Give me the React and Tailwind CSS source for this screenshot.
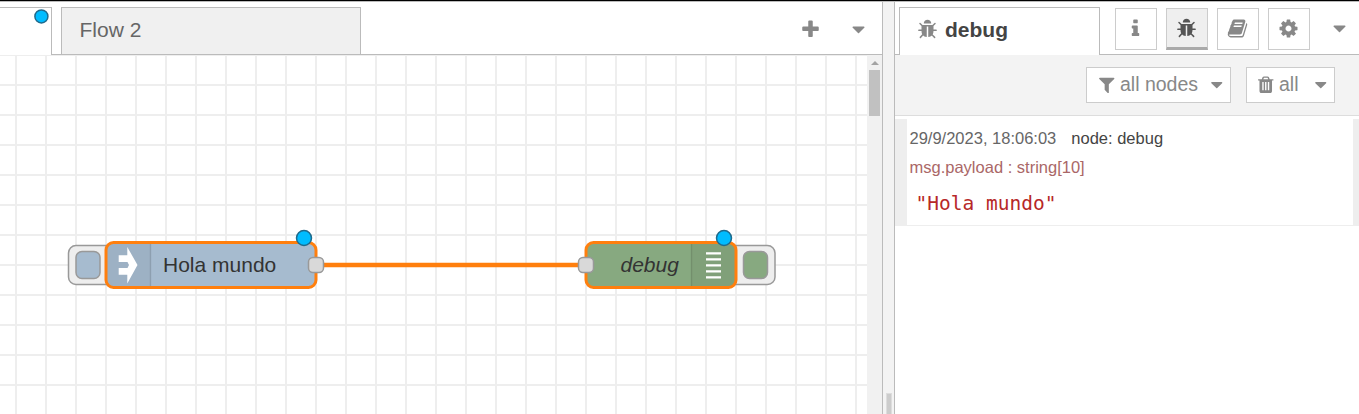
const ICONS = {
  info: "M1216 1344v128q0 26-19 45t-45 19h-512q-26 0-45-19t-19-45v-128q0-26 19-45t45-19h64v-384h-64q-26 0-45-19t-19-45v-128q0-26 19-45t45-19h384q26 0 45 19t19 45v576h64q26 0 45 19t19 45zm-128-1152v192q0 26-19 45t-45 19h-256q-26 0-45-19t-19-45v-192q0-26 19-45t45-19h256q26 0 45 19t19 45z",
  plus: "M1600 736v192q0 40-28 68t-68 28h-416v416q0 40-28 68t-68 28h-192q-40 0-68-28t-28-68v-416h-416q-40 0-68-28t-28-68v-192q0-40 28-68t68-28h416v-416q0-40 28-68t68-28h192q40 0 68 28t28 68v416h416q40 0 68 28t28 68z",
  caret: "M1408 704q0 26-19 45l-448 448q-19 19-45 19t-45-19l-448-448q-19-19-19-45t19-45 45-19h896q26 0 45 19t19 45z",
  filter: "M1595 295q17 41-14 70l-493 493v742q0 42-39 59-13 5-25 5-27 0-45-19l-256-256q-19-19-19-45v-486l-493-493q-31-29-14-70 17-39 59-39h1280q42 0 59 39z",
  cog: "M1152 896q0-106-75-181t-181-75-181 75-75 181 75 181 181 75 181-75 75-181zm512-109v222q0 12-8 23t-20 13l-185 28q-19 54-39 91 35 50 107 138 10 12 10 25t-9 23q-27 37-99 108t-94 71q-12 0-26-9l-138-108q-44 23-91 38-16 136-29 186-7 28-36 28h-222q-14 0-24.5-8.5t-11.5-21.5l-28-184q-49-16-90-37l-141 107q-10 9-25 9-14 0-25-11-126-114-165-168-7-10-7-23 0-12 8-23 15-21 51-66.5t54-70.5q-27-50-41-99l-183-27q-13-2-21-12.5t-8-23.5v-222q0-12 8-23t19-13l186-28q14-46 39-92-40-57-107-138-10-12-10-24 0-10 9-23 26-36 98.5-107.5t94.5-71.5q13 0 26 10l138 107q44-23 91-38 16-136 29-186 7-28 36-28h222q14 0 24.5 8.5t11.5 21.5l28 184q49 16 90 37l142-107q9-9 24-9 13 0 25 10 129 119 165 170 7 8 7 22 0 12-8 23-15 21-51 66.5t-54 70.5q26 50 41 98l183 28q13 2 21 12.5t8 23.5z",
  bug: "M1696 960q0 26-19 45t-45 19h-224q0 171-67 290l208 209q19 19 19 45t-19 45q-18 19-45 19t-45-19l-198-197q-5 5-15 13t-42 28.5-65 36.5-82 29-97 13v-896h-128v896q-51 0-101.500-13.500t-87-33-66-39-43.500-32.500l-15-14-183 207q-20 21-48 21-24 0-43-16-19-18-20.500-44.500t15.500-46.500l202-227q-58-114-58-274h-224q-26 0-45-19t-19-45 19-45 45-19h224v-294l-173-173q-19-19-19-45t19-45 45-19 45 19l173 173h844l173-173q19-19 45-19t45 19 19 45-19 45l-173 173v294h224q26 0 45 19t19 45zm-480-576h-640q0-133 93.500-226.500t226.500-93.500 226.500 93.500 93.500 226.500z",
  trash: "M704 1376v-704q0-14-9-23t-23-9h-64q-14 0-23 9t-9 23v704q0 14 9 23t23 9h64q14 0 23-9t9-23zm256 0v-704q0-14-9-23t-23-9h-64q-14 0-23 9t-9 23v704q0 14 9 23t23 9h64q14 0 23-9t9-23zm256 0v-704q0-14-9-23t-23-9h-64q-14 0-23 9t-9 23v704q0 14 9 23t23 9h64q14 0 23-9t9-23zm-544-992h448l-48-117q-7-9-17-11h-317q-10 2-17 11zm928 32v64q0 14-9 23t-23 9h-96v948q0 83-47 143.500t-113 60.500h-832q-66 0-113-58.500t-47-141.500v-952h-96q-14 0-23-9t-9-23v-64q0-14 9-23t23-9h309l70-167q15-37 54-63t79-26h320q40 0 79 26t54 63l70 167h309q14 0 23 9t9 23z",
  book: "M1703 478q40 57 18 129l-275 906q-19 64-76.500 107.500t-122.500 43.500h-923q-77 0-148.500-53.500t-99.500-131.500q-24-67-2-127 0-4 3-27t4-37q1-8-3-21.500t-3-19.500q2-11 8-21t16.500-23.500 16.500-23.500q23-38 45-91.500t30-91.500q3-10 .5-30t-.5-28q3-11 17-28t17-23q21-36 42-92t25-90q1-9-2.500-32t.5-28q4-13 22-30.500t22-22.500q19-26 42.500-84.500t27.500-96.500q1-8-3-25.500t-2-26.500q2-8 9-18t18-23 17-21q8-12 16.500-30.500t15-35 16-36 19.500-32 26.500-23.500 36-11.500 47.500 5.500l-1 3q38-9 51-9h761q74 0 114 56t18 130l-274 906q-36 119-71.500 153.500t-128.500 34.500h-869q-27 0-38 15-11 16-1 43 24 70 144 70h923q29 0 56-15.500t35-41.500l300-987q7-22 5-57 38 15 59 43zm-1064 2q-4 13 2 22.500t20 9.500h608q13 0 25.500-9.500t16.500-22.500l21-64q4-13-2-22.500t-20-9.500h-608q-13 0-25.500 9.500t-16.500 22.500zm-83 256q-4 13 2 22.500t20 9.500h608q13 0 25.500-9.500t16.500-22.500l21-64q4-13-2-22.500t-20-9.500h-608q-13 0-25.500 9.500t-16.500 22.500z",
};

function Icon({ name, size = "size-[21px]", className = "" }) {
  return (
    <svg viewBox="0 0 1792 1792" fill="currentColor" className={`${size} shrink-0 ${className}`}>
      <path d={ICONS[name]} />
    </svg>
  );
}

function ChangedDot({ cx, cy, r = 7.5 }) {
  return <circle cx={cx} cy={cy} r={r} fill="#00bcff" stroke="#1f6a8c" strokeWidth="1.5" />;
}

function Port({ cx }) {
  return <rect x={cx - 7.5} y="202.5" width="15" height="15" rx="4.5" fill="#d9d9d9" stroke="#999" strokeWidth="1.5" />;
}

function FlowCanvas() {
  return (
    <svg width="867" height="359" className="block shrink-0 bg-white">
      <defs>
        <pattern id="grid" x="15" y="-1" width="30" height="30" patternUnits="userSpaceOnUse">
          <rect width="30" height="2" fill="#eee" />
          <rect width="2" height="30" fill="#eee" />
        </pattern>
      </defs>
      <rect width="867" height="359" fill="url(#grid)" />
      <path d="M316 210H586" stroke="#ff7f0e" strokeWidth="4.5" />

      <g>
        <rect x="68.500" y="190.500" width="48" height="39" rx="7.5" fill="#eee" stroke="#999" strokeWidth="1.5" />
        <rect x="76" y="196.500" width="24" height="27" rx="6" fill="#a6bbcf" stroke="#999" strokeWidth="1.5" />
        <rect x="106" y="187.500" width="210" height="45" rx="7.5" fill="#a6bbcf" />
        <path d="M113.500 187.500H151V232.500H113.500a7.500 7.500 0 0 1-7.500-7.500V195a7.500 7.500 0 0 1 7.500-7.500z" fill="#000" fillOpacity=".05" />
        <path d="M150.500 188V232" stroke="#000" strokeOpacity=".1" strokeWidth="1.5" />
        <rect x="106" y="187.500" width="210" height="45" rx="7.5" fill="none" stroke="#ff7f0e" strokeWidth="3" />
        <path d="M118.700 200.300h8.600V192L137.500 210 127.300 228.500V219.700h-8.600V213h8.800l1.500-3-1.500-3h-8.800z" fill="#fff" />
        <text x="163" y="217" fontSize="21" fill="#333" className="font-['Liberation_Sans',sans-serif]">Hola mundo</text>
        <Port cx={316} />
        <ChangedDot cx={304} cy={183} />
      </g>

      <g>
        <rect x="727" y="190.500" width="48" height="39" rx="7.5" fill="#eee" stroke="#999" strokeWidth="1.5" />
        <rect x="743.500" y="196.500" width="24" height="27" rx="6" fill="#87a980" stroke="#999" strokeWidth="1.5" />
        <rect x="586" y="187.500" width="150" height="45" rx="7.5" fill="#87a980" />
        <path d="M691 187.500h37.500a7.500 7.500 0 0 1 7.500 7.500V225a7.500 7.500 0 0 1-7.500 7.500H691z" fill="#000" fillOpacity=".05" />
        <path d="M691.500 188V232" stroke="#000" strokeOpacity=".1" strokeWidth="1.5" />
        <rect x="586" y="187.500" width="150" height="45" rx="7.5" fill="none" stroke="#ff7f0e" strokeWidth="3" />
        <path d="M706 198.300h15M706 204.300h15M706 210.300h15M706 216.300h15M706 222.300h15" stroke="#fff" strokeWidth="2.200" />
        <text x="620.500" y="217" fontSize="21" fontStyle="italic" fill="#333" className="font-['Liberation_Sans',sans-serif]">debug</text>
        <Port cx={586} />
        <ChangedDot cx={724} cy={183} />
      </g>
    </svg>
  );
}

function Workspace() {
  return (
    <main className="flex w-[883px] shrink-0 flex-col border-r border-[#bbb] bg-white">
      <div className="flex h-[53px] shrink-0">
        <div className="mt-[5px] flex w-[52px] justify-end border-t border-r border-[#bbb]">
          <svg width="16" height="17" className="mr-[1px]">
            <ChangedDot cx={7.4} cy={8.4} r={6.5} />
          </svg>
        </div>
        <div className="flex flex-1 border-b border-[#bbb] pl-[9px]">
          <div className="mt-[5px] flex w-[300px] border border-b-0 border-[#bbb] bg-[#f0f0f0] pt-[6px] pl-[17.500px] text-[21px] leading-[32px] text-[#666]">
            Flow 2
          </div>
          <div className="ml-auto flex gap-[27px] pt-[17px] pr-[13.500px] text-[#888]">
            <Icon name="plus" />
            <Icon name="caret" />
          </div>
        </div>
      </div>
      <div className="flex h-[359px]">
        <FlowCanvas />
        <div className="flex w-[15px] flex-col bg-[#f1f1f1] px-[2px] pt-[6px]">
          <svg viewBox="0 0 8 4" className="mx-auto h-[4px] w-[8px]">
            <path d="M4 0l4 4H0z" fill="#a3a3a3" />
          </svg>
          <div className="mt-[5px] h-[46px] bg-[#c1c1c1]" />
        </div>
      </div>
    </main>
  );
}

function SidebarButton({ icon, active }) {
  return (
    <button
      className={
        active
          ? "flex size-[42px] justify-center border border-b-3 border-[#ccc] border-b-[#aaa] bg-[#efefef] pt-[9px] pr-[1px] text-[#555]"
          : "flex size-[42px] justify-center border border-[#ccc] bg-white pt-[9px] pr-[2px] text-[#888]"
      }
    >
      <Icon name={icon} />
    </button>
  );
}

function Sidebar() {
  return (
    <aside className="flex flex-1 flex-col border-l border-[#bbb] bg-white">
      <div className="flex h-[53px] shrink-0">
        <div className="w-[4px] border-b border-[#bbb]" />
        <div className="mt-[5px] flex w-[201px] border border-b-0 border-[#bbb] pt-[6px] pl-[17px]">
          <Icon name="bug" className="mt-[5px] text-[#888]" />
          <span className="ml-[7px] text-[21px] leading-[32px] font-bold text-[#444]">debug</span>
        </div>
        <div className="flex flex-1 gap-[9px] border-b border-[#bbb] pt-[6px] pl-[15px]">
          <SidebarButton icon="info" />
          <SidebarButton icon="bug" active />
          <SidebarButton icon="book" />
          <SidebarButton icon="cog" />
          <Icon name="caret" className="mt-[10px] ml-[10px] text-[#888]" />
        </div>
      </div>
      <div className="flex h-[61px] shrink-0 justify-end gap-[15px] border-b border-[#ddd] bg-[#f3f3f3] pt-[12px] pr-[24px] text-[19.500px] leading-[32px] text-[#888]">
        <button className="flex h-[36px] w-[145px] border border-[#ccc] bg-white pl-[10px]">
          <Icon name="filter" size="size-[19.500px]" className="mt-[7px]" />
          <span className="ml-[3.500px]">all nodes</span>
          <Icon name="caret" size="size-[19.500px]" className="mt-[7px] ml-[9px]" />
        </button>
        <button className="flex h-[36px] w-[89px] border border-[#ccc] bg-white pl-[9px]">
          <Icon name="trash" size="size-[19.500px]" className="mt-[7px]" />
          <span className="ml-[3.500px]">all</span>
          <Icon name="caret" size="size-[19.500px]" className="mt-[7px] ml-[12px]" />
        </button>
      </div>
      <div className="mt-[3px] flex h-[107px] flex-col border-r-6 border-b border-l-12 border-[#eee] pl-[2.500px]">
        <div className="flex gap-[15px] pt-[8px] text-[16.500px] leading-[23px]">
          <span className="text-[#666]">29/9/2023, 18:06:03</span>
          <span className="text-[#444]">node: debug</span>
        </div>
        <div className="mt-[6px] text-[16.500px] leading-[23px] text-[#aa6767]">msg.payload : string[10]</div>
        <div className="mt-[13px] pl-[6px] font-['DejaVu_Sans_Mono',monospace] text-[19.500px] leading-[24px] text-[#b72828]">
          "Hola mundo"
        </div>
      </div>
    </aside>
  );
}

export default function App() {
  return (
    <div className="flex h-[414px] w-[1359px] overflow-hidden border-t border-black bg-[#f3f3f3] font-['Liberation_Sans',Arial,sans-serif]">
      <div className="flex flex-1 border-t border-[#bbb]">
        <Workspace />
        <div className="flex w-[11px] shrink-0 flex-col justify-end pl-[3px]">
          <div className="h-[21px] w-[6px] border-x border-t border-[#ddd] bg-[#ccc]" />
        </div>
        <Sidebar />
      </div>
    </div>
  );
}
